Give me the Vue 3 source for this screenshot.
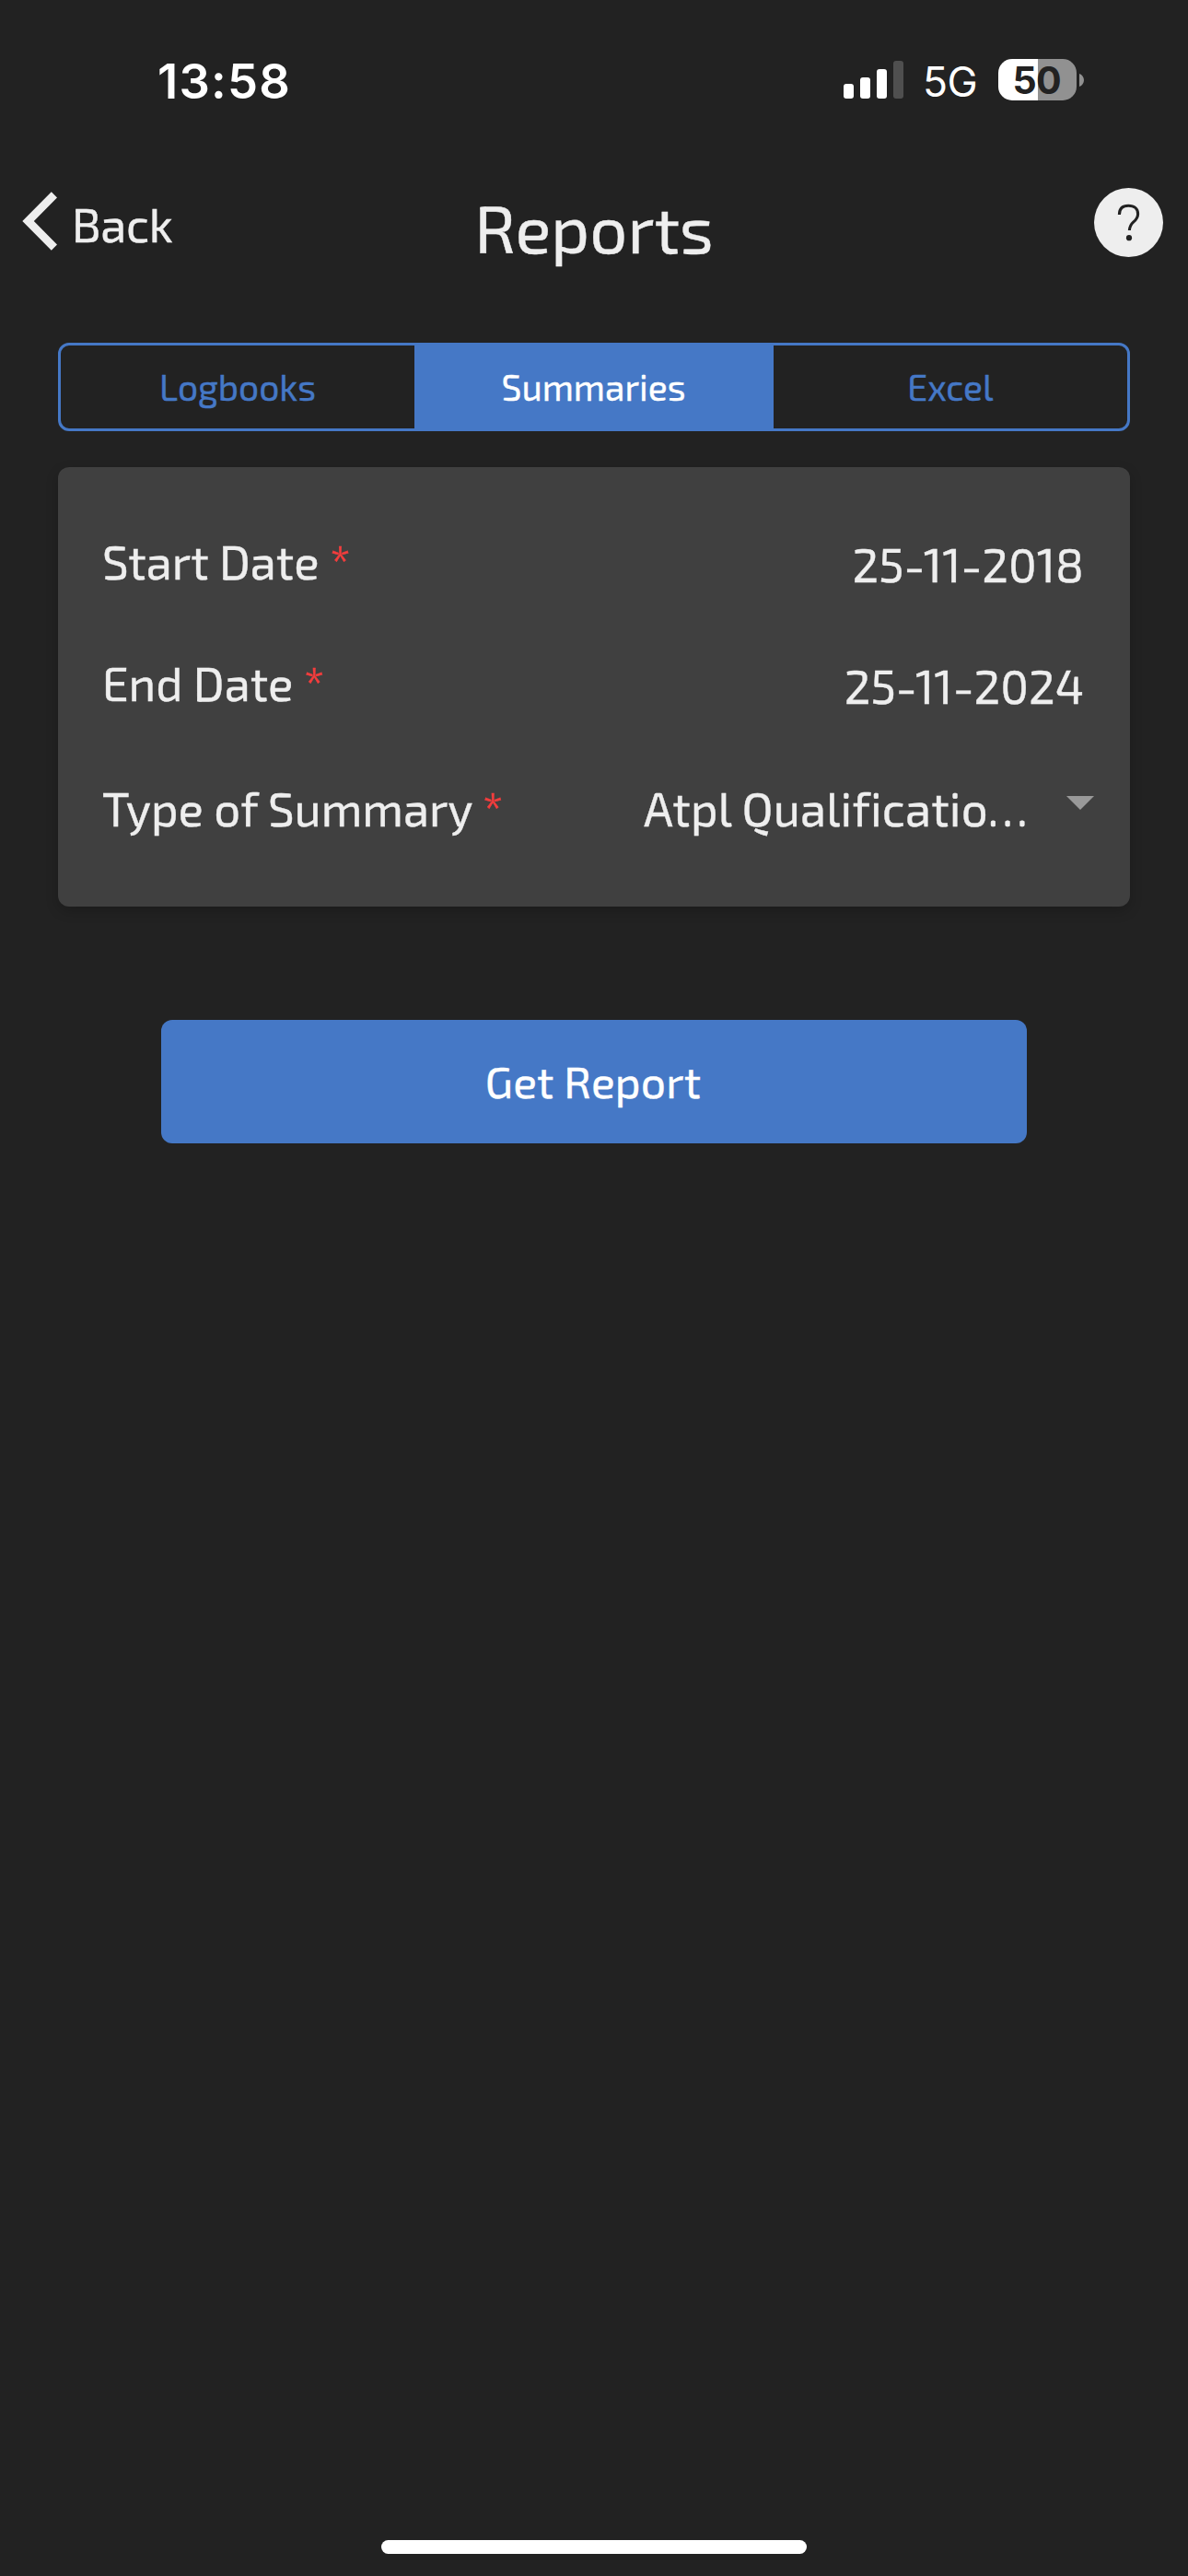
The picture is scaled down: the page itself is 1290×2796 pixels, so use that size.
<script setup>
import { ref } from 'vue'

const tabs = ['Logbooks', 'Summaries', 'Excel']
const active = ref('Summaries')
</script>

<template>
  <div class="screen">
    <div class="status">
      <span class="time">13:58</span>
      <div class="indicators">
        <svg class="signal" width="65" height="41" viewBox="0 0 65 41">
          <rect x="0" y="25" width="11" height="16" rx="3" fill="#fff" />
          <rect x="18" y="18" width="11" height="23" rx="3" fill="#fff" />
          <rect x="36" y="9" width="11" height="32" rx="3" fill="#fff" />
          <rect x="54" y="0" width="11" height="41" rx="3" fill="#4f4f4f" />
        </svg>
        <span class="network">5G</span>
        <div class="battery"><span>50</span></div>
        <svg class="nub" width="5" height="14" viewBox="0 0 5 14">
          <path d="M0 0C3 1 5 4 5 7S3 13 0 14Z" fill="#919191" />
        </svg>
      </div>
    </div>

    <header class="header">
      <button class="back">
        <svg width="38" height="64" viewBox="0 0 38 64">
          <path d="M0.3 32 31.8 0.3 38 6.5 12.8 32 38 57.5 31.8 63.7Z" fill="#eee" />
        </svg>
        <span>Back</span>
      </button>
      <h1>Reports</h1>
      <button class="help" aria-label="Help">
        <svg width="75" height="75" viewBox="0 0 75 75">
          <circle cx="37.5" cy="37.5" r="37.5" fill="#eee" />
          <path
            d="M27.4 29C27.4 22.8 31 19.3 37.3 19.3C43.7 19.3 47.6 22.8 47.6 28.2C47.6 32 45.8 34.4 42.6 37.2C39.7 39.8 38.7 41.7 38.4 46"
            fill="none" stroke="#222" stroke-width="3.1"
          />
          <circle cx="38" cy="54.2" r="3.1" fill="#222" />
        </svg>
      </button>
    </header>

    <nav class="tabs">
      <button
        v-for="tab in tabs"
        :key="tab"
        :class="['tab', { active: tab === active }]"
        @click="active = tab"
      >{{ tab }}</button>
    </nav>

    <section class="card">
      <div class="row">
        <label>Start Date <i>*</i></label>
        <span class="value">25-11-2018</span>
      </div>
      <div class="row">
        <label>End Date <i>*</i></label>
        <span class="value">25-11-2024</span>
      </div>
      <div class="row select">
        <label>Type of Summary <i>*</i></label>
        <span class="value summary">Atpl Qualificatio…</span>
        <svg class="caret" width="30" height="15" viewBox="0 0 30 15">
          <path d="M0 0H30L15 15Z" fill="#999" />
        </svg>
      </div>
    </section>

    <button class="submit">Get Report</button>
    <div class="home"></div>
  </div>
</template>

<style>
body {
  background: #222;
}
</style>

<style scoped>
.screen {
  box-sizing: border-box;
  display: flex;
  flex-direction: column;
  width: 1290px;
  height: 2796px;
  background: #222;
  color: #eee;
  font-family: "Exo 2", Roboto, sans-serif;
  -webkit-text-stroke: 0.4px currentColor;
  overflow: hidden;
}
button {
  border: 0;
  margin: 0;
  padding: 0;
  background: none;
  color: inherit;
  font: inherit;
}
.status {
  display: flex;
  justify-content: space-between;
  box-sizing: border-box;
  height: 180px;
  padding: 58px 113px 0 171px;
  color: #fff;
  font-family: Inter, sans-serif;
  -webkit-text-stroke: 0;
}
.time {
  font-size: 52.5px;
  font-weight: 600;
  line-height: 60px;
  letter-spacing: 1.2px;
}
.indicators {
  display: flex;
  align-items: flex-start;
}
.signal {
  margin-top: 8px;
}
.network {
  width: 57px;
  margin: 1px 0 0 21px;
  font-size: 44.5px;
  line-height: 60px;
  letter-spacing: -0.6px;
}
.battery {
  width: 85px;
  height: 45px;
  margin: 6px 3px 0 25px;
  border-radius: 15px;
  background: linear-gradient(90deg, #fff 43px, #919191 43px);
  color: #222;
  font-size: 41px;
  font-weight: 700;
  line-height: 46px;
  letter-spacing: -0.8px;
}
.battery span {
  padding-left: 15.5px;
}
.nub {
  margin-top: 22px;
}
.header {
  display: grid;
  grid-template-columns: 1fr auto 1fr;
  align-items: start;
  box-sizing: border-box;
  height: 192px;
  padding: 0 27px 0 24px;
}
.back {
  display: flex;
  align-items: flex-start;
  padding-top: 28px;
}
.back span {
  margin: 5px 0 0 16px;
  font-size: 51px;
  line-height: 60px;
  letter-spacing: -0.3px;
}
h1 {
  margin: 25px 0 0;
  padding-left: 3px;
  font-size: 72.4px;
  font-weight: 400;
  line-height: 84px;
}
.help {
  justify-self: end;
  height: 75px;
  margin-top: 24px;
}
.help svg {
  display: block;
}
.tabs {
  display: grid;
  grid-template-columns: 384px 390px 384px;
  box-sizing: border-box;
  height: 96px;
  margin: 0 63px;
  border: 3px solid #4578c6;
  border-radius: 12px;
}
.tab {
  padding-bottom: 1px;
  color: #4578c6;
  font-size: 39px;
  line-height: 44px;
}
.tab.active {
  padding-right: 1px;
  background: #4578c6;
  color: #fff;
}
.card {
  box-sizing: border-box;
  height: 477px;
  margin: 39px 63px 0;
  padding: 57px 39px 0 48px;
  border-radius: 12px;
  background: #404040;
  box-shadow: 0 5px 14px rgba(0, 0, 0, 0.2);
}
.row {
  display: flex;
  align-items: flex-start;
  box-sizing: border-box;
  height: 132px;
  padding-top: 15px;
  font-size: 51px;
  line-height: 60px;
  white-space: nowrap;
}
.row i {
  color: #f43d3d;
  font-style: normal;
}
.value {
  margin: 3px 11px 0 auto;
}
.select {
  padding-top: 19px;
}
.summary {
  width: 459px;
  margin: 0 0 0 auto;
  letter-spacing: 0.2px;
}
.caret {
  margin-top: 17px;
}
.submit {
  width: 940px;
  height: 134px;
  margin: 123px auto 0;
  padding: 0 2px 2px 0;
  border-radius: 12px;
  background: #4578c6;
  color: #fff;
  font-size: 48px;
  letter-spacing: 0.15px;
}
.home {
  width: 462px;
  height: 15px;
  margin: auto auto 24px;
  border-radius: 8px;
  background: #fff;
}
</style>
